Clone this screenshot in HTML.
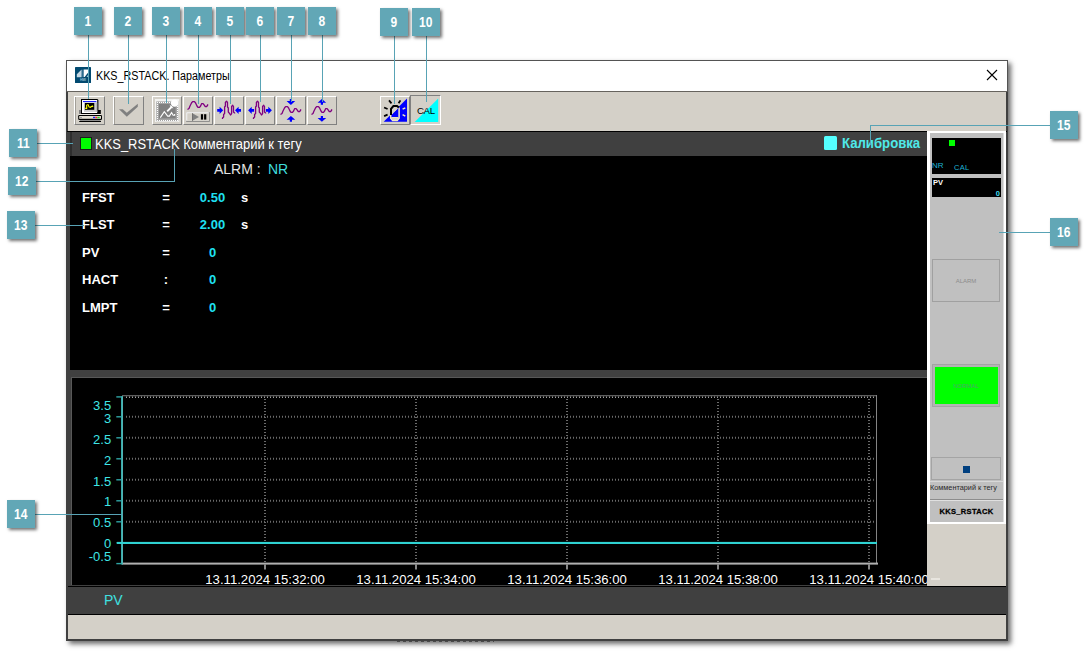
<!DOCTYPE html>
<html lang="ru">
<head>
<meta charset="utf-8">
<title>KKS_RSTACK. Параметры</title>
<style>
html,body{margin:0;padding:0;}
body{width:1089px;height:651px;background:#fff;position:relative;overflow:hidden;font-family:"Liberation Sans",sans-serif;}
.abs{position:absolute;}
/* callouts */
.co{position:absolute;width:28px;height:28px;background:#62a7b6;color:#fff;font-weight:bold;font-size:14px;line-height:28px;text-align:center;box-shadow:2px 2px 3px rgba(0,0,0,.55);z-index:30;}
.co span{display:inline-block;transform:scaleX(.86);}
.ln{position:absolute;background:#58a3b5;z-index:25;}
/* window */
#win{position:absolute;left:66px;top:60px;width:942px;height:581px;background:#404040;box-shadow:3px 3px 5px rgba(0,0,0,.58);}
#title{position:absolute;left:1px;top:1px;width:940px;height:30px;background:#fff;}
#title .t{position:absolute;left:29px;transform-origin:0 50%;transform:scaleX(.897);top:7px;font-size:12px;line-height:16px;color:#000;white-space:nowrap;}
#tbar{position:absolute;left:2px;top:32px;width:938px;height:39px;background:#d4d0c8;}
.btn{position:absolute;top:36px;width:28px;height:27px;border:1px solid;border-color:#fff #808080 #808080 #fff;background:#d4d0c8;}
.btn svg{position:absolute;left:-1px;top:-1px;}
.btn.dn{border-color:#808080 #fff #fff #808080;background:#d4d0c8;}
#hdr{position:absolute;left:6px;top:72px;width:855px;height:24px;background:#404040;}
#top{position:absolute;left:4px;top:96px;width:857px;height:214px;background:#000;}
#chart{position:absolute;left:5px;top:317px;width:856px;height:208px;background:#000;}
#leg{position:absolute;left:2px;top:526px;width:938px;height:29px;background:#404040;box-sizing:border-box;border-top:1px solid #000;border-bottom:1px solid #000;}
#stat{position:absolute;left:2px;top:555px;width:938px;height:24px;background:#d4d0c8;}
.row{position:absolute;left:0;font-weight:bold;font-size:13px;line-height:16px;color:#fff;white-space:nowrap;}
.row span{position:absolute;top:0;}
.cy{color:#1fe0f2;}
/* faceplate */
#fp{position:absolute;left:861px;top:71px;width:79px;height:393px;background:#c0c0c0;}
</style>
</head>
<body>

<div id="win">
  <div class="abs" style="left:0;top:0;width:942px;height:32px;background:#535353"></div>
  <div id="title">
    <svg class="abs" style="left:8px;top:6px" width="16" height="16" viewBox="0 0 16 16">
      <rect width="16" height="16" rx="0.6" fill="#024a70"/>
      <polygon points="1.8,7.2 6.6,2.6 6.6,10.3 1.8,10.3" fill="#c4d8e4"/>
      <rect x="7" y="2.6" width="1.7" height="7.7" fill="#2c6c8e"/>
      <polygon points="8.7,2.4 13.1,2.4 13.1,5.6 9.7,9.9 8.7,9.9" fill="#ffffff"/>
      <polygon points="13.1,7.8 13.1,10.1 11.5,10.1" fill="#a8c4d4"/>
      <text x="7.9" y="13.9" font-size="2.6" font-weight="bold" text-anchor="middle" fill="#9cc0d4" font-family="Liberation Sans, sans-serif" textLength="6" lengthAdjust="spacingAndGlyphs">HMI</text>
    </svg>
    <div class="t">KKS_RSTACK. Параметры</div>
    <svg class="abs" style="left:919px;top:8px" width="12" height="12" viewBox="0 0 12 12"><path d="M1 1 L11 11 M11 1 L1 11" stroke="#000" stroke-width="1.1" fill="none"/></svg>
  </div>
  <div class="abs" style="left:1px;top:31px;width:940px;height:1px;background:#66635e"></div>
  <div id="tbar"></div>
<div class="btn" style="left:8px;width:29px;box-shadow:inset 1px 0 0 #a29f98"><svg width="30" height="29" viewBox="1 1 30 29" style="left:0">
<rect x="5" y="15" width="2" height="4" fill="#808080"/>
<rect x="24" y="15" width="2.8" height="4" fill="#000"/>
<path d="M7 4 H23.4 L24.4 5 V19 H7 Z" fill="#000"/>
<rect x="8" y="5" width="15.2" height="13" fill="#fff"/>
<rect x="21.5" y="7.5" width="1.7" height="9.5" fill="#b8b8b8"/>
<rect x="10" y="15.7" width="13.2" height="1.1" fill="#c8c8c8"/>
<rect x="9" y="6" width="13.4" height="1.1" fill="#2020ff"/>
<rect x="10" y="7.5" width="11.5" height="8.2" fill="#c0c0c0"/>
<rect x="11" y="8" width="9.2" height="6.8" fill="#000"/>
<path d="M11.2 13.4 H12.7 V10.2 L13.3 9.7 H14.2 L14.9 11.9 L16.3 12.3 L18.4 11.1" stroke="#ffff00" stroke-width="1.1" fill="none"/>
<path d="M18 10.2 L19.6 11.3 L18 12.2 Z" fill="#ffff00"/>
<rect x="5" y="19" width="22" height="1" fill="#ece8e0"/>
<rect x="4.2" y="20" width="23.8" height="5" rx="1.2" fill="#000"/>
<rect x="5.2" y="21" width="21.8" height="2.8" fill="#e2ded2"/>
<rect x="6" y="22" width="2" height="1" fill="#a0a0a0"/>
<rect x="19" y="21.8" width="2.2" height="1.3" fill="#2020ff"/>
<rect x="21.3" y="21.8" width="2" height="1.3" fill="#ff2020"/>
<rect x="23.4" y="21.8" width="2.3" height="1.3" fill="#20e020"/>
<rect x="6" y="25" width="20.5" height="1" fill="#8c8c8c"/>
<rect x="5.2" y="26" width="21.8" height="1" fill="#000"/>
</svg></div>
<div class="btn" style="left:47px;width:29px;box-shadow:inset 1px 0 0 #a29f98"><svg width="30" height="29" viewBox="1 1 30 29" style="left:0"><g transform="translate(-1,0)"><polygon points="7,14.3 10.8,14.3 14.8,17.8 25.8,8.8 25.8,11.8 14.8,21.8" fill="#808080"/></g></svg></div>
<div class="btn" style="left:86px"><svg width="30" height="29" viewBox="1 1 30 29">
<rect x="4" y="4" width="24.3" height="23" fill="#f4f4f2"/>
<rect x="5.3" y="6.4" width="22" height="19.8" fill="#a4a4a4"/>
<path d="M6 7.5 H27 M6 25.5 H27" stroke="#fff" stroke-width="1" stroke-dasharray="1 1" fill="none"/><path d="M6.5 7 V26 M26.5 7 V26" stroke="#fff" stroke-width="1" stroke-dasharray="1 1" fill="none"/>
<rect x="8" y="9" width="16.6" height="14.4" fill="#808080"/>
<path d="M9.3 22.6 L13.3 16.7 L16.7 21.1 H18.4 L20.6 17.5 L22.1 20.2 H23.6 V18.9" stroke="#fff" stroke-width="1.1" fill="none"/>
<path d="M16.2 16.4 L21 11.5" stroke="#fff" stroke-width="1.8" fill="none"/>
<path d="M18.5 9.5 L22.5 13.2 L20 13 Z" fill="#fff"/>
<circle cx="23.6" cy="8.1" r="3.7" fill="#fff"/>
</svg></div>
<div class="btn" style="left:117px"><svg width="30" height="29" viewBox="1 1 30 29">
<path d="M5.5 14.5 L7 13.5 L8 11 L9.5 8 L10.6 6.6 L12.5 6.6 L13.6 8 L15 11 L16 12.4 L17.5 12.4 L18.6 11 L19.7 8.6 L21.1 8.6 L22.2 10 L23.1 11.5 L24.6 11.5 L25.6 10.3 L25.6 9.3" stroke="#800080" stroke-width="1.3" fill="none" stroke-linejoin="round"/>
<rect x="4.2" y="17.2" width="23.6" height="9.6" fill="#808080"/>
<rect x="4.2" y="17.2" width="22.6" height="8.6" fill="#fff"/>
<rect x="5.2" y="18.2" width="21.6" height="7.6" fill="#d4d0c8"/>
<rect x="10" y="18.2" width="0.9" height="7.6" fill="#606060"/>
<polygon points="10.8,18.4 17,21.9 10.8,25.4" fill="#808080"/>
<rect x="18.9" y="19.2" width="2.2" height="5.4" fill="#000"/>
<rect x="22.1" y="19.2" width="2.2" height="5.4" fill="#000"/>
</svg></div>
<div class="btn" style="left:148px"><svg width="30" height="29" viewBox="1 1 30 29"><path d="M9.5 24 L9.5 23 L10.6 22 L10.6 19.5 L11.6 18.5 L11.6 12 L12.4 11 L12.4 7.5 L13.5 6.2 L14.5 7.5 L14.5 12 L15.3 13 L15.3 17 L16.2 18 L17.5 20 L18.6 18.5 L18.6 11.5 L19.7 10.3 L20.5 11.5 L20.5 17 L21.6 18 L21.6 18.6" stroke="#800080" stroke-width="1.3" fill="none" stroke-linejoin="round"/><polygon points="4.2,14 6.6,14 6.6,11.8 10.2,15.35 6.6,18.9 6.6,16.7 4.2,16.7" fill="#0000ff"/><polygon points="28,14 25.6,14 25.6,11.8 22,15.35 25.6,18.9 25.6,16.7 28,16.7" fill="#0000ff"/></svg></div>
<div class="btn" style="left:179px"><svg width="30" height="29" viewBox="1 1 30 29"><path d="M9.5 24 L9.5 23 L10.6 22 L10.6 19.5 L11.6 18.5 L11.6 12 L12.4 11 L12.4 7.5 L13.5 6.2 L14.5 7.5 L14.5 12 L15.3 13 L15.3 17 L16.2 18 L17.5 20 L18.6 18.5 L18.6 11.5 L19.7 10.3 L20.5 11.5 L20.5 17 L21.6 18 L21.6 18.6" stroke="#800080" stroke-width="1.3" fill="none" stroke-linejoin="round"/><polygon points="10.1,14 7.699999999999999,14 7.699999999999999,11.8 4.1,15.35 7.699999999999999,18.9 7.699999999999999,16.7 10.1,16.7" fill="#0000ff"/><polygon points="21.9,14 24.299999999999997,14 24.299999999999997,11.8 27.9,15.35 24.299999999999997,18.9 24.299999999999997,16.7 21.9,16.7" fill="#0000ff"/></svg></div>
<div class="btn" style="left:210px"><svg width="30" height="29" viewBox="1 1 30 29"><g transform="translate(0,5)"><path d="M5.5 14.5 L7 13.5 L8 11 L9.5 8 L10.6 6.6 L12.5 6.6 L13.6 8 L15 11 L16 12.4 L17.5 12.4 L18.6 11 L19.7 8.6 L21.1 8.6 L22.2 10 L23.1 11.5 L24.6 11.5 L25.6 10.3 L25.6 9.3" stroke="#800080" stroke-width="1.3" fill="none" stroke-linejoin="round"/></g><polygon points="14.8,4.1 17,4.1 17,6.1 20.2,6.1 15.9,9.899999999999999 11.6,6.1 14.8,6.1" fill="#0000ff"/><polygon points="14.8,26.8 17,26.8 17,24.8 20.2,24.8 15.9,21.0 11.6,24.8 14.8,24.8" fill="#0000ff"/></svg></div>
<div class="btn" style="left:241px"><svg width="30" height="29" viewBox="1 1 30 29"><g transform="translate(0,5)"><path d="M5.5 14.5 L7 13.5 L8 11 L9.5 8 L10.6 6.6 L12.5 6.6 L13.6 8 L15 11 L16 12.4 L17.5 12.4 L18.6 11 L19.7 8.6 L21.1 8.6 L22.2 10 L23.1 11.5 L24.6 11.5 L25.6 10.3 L25.6 9.3" stroke="#800080" stroke-width="1.3" fill="none" stroke-linejoin="round"/></g><polygon points="14.8,9.8 17,9.8 17,7.800000000000001 20.2,7.800000000000001 15.9,4.000000000000001 11.6,7.800000000000001 14.8,7.800000000000001" fill="#0000ff"/><polygon points="14.8,20.9 17,20.9 17,22.9 20.2,22.9 15.9,26.7 11.6,22.9 14.8,22.9" fill="#0000ff"/></svg></div>
<div class="btn" style="left:314px"><svg width="30" height="29" viewBox="1 1 30 29"><g transform="translate(-1,-1)">
<polygon points="5.7,27.8 29,4.5 29,27.8" fill="#0000ff"/>
<polygon points="13.9,20.2 13.9,14.9 15.6,13 19.2,13 20.4,14 13.9,20.4" fill="#d4d0c8"/>
<path d="M14.2 19.6 L18.6 15.2" stroke="#f0e8c0" stroke-width="1" stroke-dasharray="1 .8" fill="none"/>
<polygon points="13.2,22.9 20.5,22.9 20.5,24.2 18.9,25.9 14.9,25.9 13.2,24.2" fill="#d4d0c8"/>
<path d="M13.6 23.5 H20" stroke="#eee6c2" stroke-width=".8" fill="none"/>
<path d="M21.1 13.4 V24.3 L19.2 26.4 H14.6 L12.7 24.3 V20.6" stroke="#f4ecc4" stroke-width="1.5" fill="none"/>
<path d="M13 21 V14.8 L15.4 12 H19 L20.9 13.6" stroke="#000" stroke-width="2" fill="none" stroke-linejoin="miter"/>
<path d="M11 6.4 L13.5 9.3 M22.4 6.4 L20.6 9.3 M6.1 13.5 L9.6 15 M6.1 22.1 L9.6 20.6" stroke="#000" stroke-width="1.8" fill="none"/>
<path d="M27.3 13.8 L24.6 15.2 M24.6 20.6 L27.3 22.1" stroke="#f0e8c0" stroke-width="1.5" fill="none"/>
</g></svg></div>
<div class="btn dn" style="left:344px;top:35px;width:29px;height:28px"><svg width="31" height="30" viewBox="0 0 31 30" style="left:-1px;top:-1px">
<polygon points="4.7,27 28.2,3.5 28.2,27" fill="#00ffff"/>
<text x="6.9" y="18.8" font-family="Liberation Sans, sans-serif" font-size="9.7" textLength="18.2" lengthAdjust="spacing" fill="#000">CAL</text>
</svg></div>

  <div class="abs" style="left:1px;top:71px;width:940px;height:1px;background:#000"></div>

  <div class="abs" style="left:4px;top:72px;width:2px;height:24px;background:#2e2e2e"></div>
  <div id="hdr">
    <div class="abs" style="left:8px;top:5px;width:10px;height:11px;background:#00ff00;border:1px solid #1c1c1c"></div>
    <div class="abs" style="left:23px;top:4px;font-size:14px;line-height:17px;color:#fff;white-space:nowrap;transform-origin:0 50%;transform:scaleX(.924)">KKS_RSTACK Комментарий к тегу</div>
    <div class="abs" style="left:752px;top:4px;width:13px;height:14px;background:#55ffff;border-radius:1.5px"></div>
    <div class="abs" style="left:770px;top:3px;font-size:14px;line-height:17px;font-weight:bold;color:#4fe9e9;white-space:nowrap;transform-origin:0 50%;transform:scaleX(.94)">Калибровка</div>
  </div>
  <div id="top"><div class="abs" style="left:2px;top:0.5px">
    <div class="abs" style="left:142px;top:4px;font-size:14px;line-height:17px;color:#e4e4e4;white-space:nowrap">ALRM :</div>
    <div class="abs" style="left:196px;top:4px;font-size:14px;line-height:17px;color:#3fdcdc;white-space:nowrap">NR</div>
    <div class="row" style="top:33px"><span style="left:10px">FFST</span><span style="left:84px;width:20px;text-align:center">=</span><span class="cy" style="left:120.5px;width:40px;text-align:center">0.50</span><span style="left:169px">s</span></div>
    <div class="row" style="top:60.5px"><span style="left:10px">FLST</span><span style="left:84px;width:20px;text-align:center">=</span><span class="cy" style="left:120.5px;width:40px;text-align:center">2.00</span><span style="left:169px">s</span></div>
    <div class="row" style="top:88px"><span style="left:10px">PV</span><span style="left:84px;width:20px;text-align:center">=</span><span class="cy" style="left:120.5px;width:40px;text-align:center">0</span></div>
    <div class="row" style="top:115.5px"><span style="left:10px">HACT</span><span style="left:84px;width:20px;text-align:center">:</span><span class="cy" style="left:120.5px;width:40px;text-align:center">0</span></div>
    <div class="row" style="top:143px"><span style="left:10px">LMPT</span><span style="left:84px;width:20px;text-align:center">=</span><span class="cy" style="left:120.5px;width:40px;text-align:center">0</span></div>
  </div></div>
  <div id="chart"><svg width="856" height="208" viewBox="71 377 856 208" style="position:absolute;left:0;top:0" font-family="Liberation Sans, sans-serif" font-size="13">
<rect x="71" y="377" width="856" height="1" fill="#585858"/><rect x="71" y="377" width="1" height="208" fill="#585858"/>
<line x1="126" x2="876" y1="521.80" y2="521.80" stroke="#6a6a6a" stroke-width="2" stroke-dasharray="1 2"/>
<line x1="126" x2="876" y1="500.80" y2="500.80" stroke="#6a6a6a" stroke-width="2" stroke-dasharray="1 2"/>
<line x1="126" x2="876" y1="479.80" y2="479.80" stroke="#6a6a6a" stroke-width="2" stroke-dasharray="1 2"/>
<line x1="126" x2="876" y1="458.80" y2="458.80" stroke="#6a6a6a" stroke-width="2" stroke-dasharray="1 2"/>
<line x1="126" x2="876" y1="437.80" y2="437.80" stroke="#6a6a6a" stroke-width="2" stroke-dasharray="1 2"/>
<line x1="126" x2="876" y1="416.80" y2="416.80" stroke="#6a6a6a" stroke-width="2" stroke-dasharray="1 2"/>
<line x1="265" x2="265" y1="399" y2="562.6" stroke="#6a6a6a" stroke-width="2" stroke-dasharray="1 2"/>
<rect x="264.3" y="564.5" width="1.4" height="5" fill="#c0c0c0"/>
<line x1="416" x2="416" y1="399" y2="562.6" stroke="#6a6a6a" stroke-width="2" stroke-dasharray="1 2"/>
<rect x="415.3" y="564.5" width="1.4" height="5" fill="#c0c0c0"/>
<line x1="567" x2="567" y1="399" y2="562.6" stroke="#6a6a6a" stroke-width="2" stroke-dasharray="1 2"/>
<rect x="566.3" y="564.5" width="1.4" height="5" fill="#c0c0c0"/>
<line x1="718" x2="718" y1="399" y2="562.6" stroke="#6a6a6a" stroke-width="2" stroke-dasharray="1 2"/>
<rect x="717.3" y="564.5" width="1.4" height="5" fill="#c0c0c0"/>
<line x1="869" x2="869" y1="399" y2="562.6" stroke="#6a6a6a" stroke-width="2" stroke-dasharray="1 2"/>
<rect x="868.3" y="564.5" width="1.4" height="5" fill="#c0c0c0"/>
<rect x="122" y="395" width="755" height="1.3" fill="#5e5e5e"/>
<line x1="126" x2="876" y1="397.2" y2="397.2" stroke="#a0a0a0" stroke-width="1.4" stroke-dasharray="1 2"/>
<rect x="876" y="395" width="1" height="169.10" fill="#848484"/>
<rect x="122" y="562.6" width="756" height="2" fill="#b0b0b0"/>
<rect x="121" y="396.1" width="1" height="168.50" fill="#38acac"/>
<rect x="122" y="396.1" width="1" height="168.50" fill="#52b4b4"/>
<rect x="116.3" y="396.20" width="5" height="1.4" fill="#2fa4a4"/>
<rect x="116.3" y="416.10" width="5" height="1.4" fill="#2fa4a4"/>
<rect x="116.3" y="437.10" width="5" height="1.4" fill="#2fa4a4"/>
<rect x="116.3" y="458.10" width="5" height="1.4" fill="#2fa4a4"/>
<rect x="116.3" y="479.10" width="5" height="1.4" fill="#2fa4a4"/>
<rect x="116.3" y="500.10" width="5" height="1.4" fill="#2fa4a4"/>
<rect x="116.3" y="521.10" width="5" height="1.4" fill="#2fa4a4"/>
<rect x="116.3" y="542.20" width="5" height="1.4" fill="#2fa4a4"/>
<rect x="116.3" y="562.90" width="5" height="1.4" fill="#2fa4a4"/>
<rect x="117" y="541.9" width="760" height="2.1" fill="#2fd2d2"/>
<text x="111.2" y="409.90" text-anchor="end" fill="#3fe6e6">3.5</text>
<text x="111.2" y="423.00" text-anchor="end" fill="#3fe6e6">3</text>
<text x="111.2" y="444.00" text-anchor="end" fill="#3fe6e6">2.5</text>
<text x="111.2" y="464.70" text-anchor="end" fill="#3fe6e6">2</text>
<text x="111.2" y="485.60" text-anchor="end" fill="#3fe6e6">1.5</text>
<text x="111.2" y="506.10" text-anchor="end" fill="#3fe6e6">1</text>
<text x="111.2" y="526.90" text-anchor="end" fill="#3fe6e6">0.5</text>
<text x="111.2" y="547.80" text-anchor="end" fill="#3fe6e6">0</text>
<text x="111.2" y="561.30" text-anchor="end" fill="#3fe6e6">-0.5</text>
<text x="265.1" y="584.2" font-size="13.15" text-anchor="middle" fill="#fff">13.11.2024 15:32:00</text>
<text x="416.1" y="584.2" font-size="13.15" text-anchor="middle" fill="#fff">13.11.2024 15:34:00</text>
<text x="567.1" y="584.2" font-size="13.15" text-anchor="middle" fill="#fff">13.11.2024 15:36:00</text>
<text x="718.1" y="584.2" font-size="13.15" text-anchor="middle" fill="#fff">13.11.2024 15:38:00</text>
<text x="869.1" y="584.2" font-size="13.15" text-anchor="middle" fill="#fff">13.11.2024 15:40:00</text>
</svg></div>
  <div id="leg"><div class="abs" style="left:36px;top:5px;font-size:14px;line-height:17px;color:#3fe0e0">PV</div></div>
  <div id="stat"></div>
  <div class="abs" style="left:865px;top:518px;width:9px;height:2px;background:#e8e5df;z-index:5"></div>
  <div class="abs" style="left:331px;top:581px;width:97px;height:1px;background:repeating-linear-gradient(90deg,#3a3a3a 0 3px,transparent 3px 6px);opacity:.8"></div>
  <div id="fp">
<div class="abs" style="left:0px;top:0px;width:79px;height:393px;box-sizing:border-box;border:2px solid #fff;border-left-width:3px;box-shadow:inset -1px 0 0 #dedede"></div>
<div class="abs" style="left:5px;top:7px;width:69px;height:36px;background:#000"><div class="abs" style="left:17px;top:2px;width:6px;height:6px;background:#00ff00"></div><div class="abs" style="left:0px;top:23px;font-size:8px;line-height:9px;color:#1fb4d4">NR</div><div class="abs" style="left:22px;top:25px;font-size:7.5px;line-height:9px;color:#1fb4d4;letter-spacing:.3px">CAL</div></div>
<div class="abs" style="left:5px;top:47px;width:69px;height:19px;background:#000"><div class="abs" style="left:1px;top:0px;font-size:7.5px;line-height:9px;color:#fff;font-weight:bold">PV</div><div class="abs" style="right:1px;top:11px;font-size:7.5px;line-height:9px;color:#3fdcf0;font-weight:bold">0</div></div>
<div class="abs" style="left:5px;top:128px;width:68px;height:43px;box-sizing:border-box;border:1px solid #a0a0a0;"><div class="abs" style="left:0;right:0;top:17px;text-align:center;font-size:6px;line-height:8px;color:#8c8c8c">ALARM</div></div>
<div class="abs" style="left:5px;top:233px;width:68px;height:43px;box-sizing:border-box;border:1px solid #a4a4a4;background:#b4b4b4"><div class="abs" style="left:2px;top:2px;width:63px;height:37px;background:#00ff00"></div><div class="abs" style="left:0;right:0;top:17px;text-align:center;font-size:6px;line-height:8px;color:#4aa86a">NORMAL</div></div>
<div class="abs" style="left:4px;top:326px;width:70px;height:23px;box-sizing:border-box;border:1px solid #a4a4a4;"><div class="abs" style="left:31px;top:8px;width:7px;height:7px;background:#003f7f"></div></div>
<div class="abs" style="left:3px;top:350px;width:73px;height:1px;background:#d8d8d8"></div>
<div class="abs" style="left:3px;top:352px;width:73px;height:10px;font-size:7.3px;line-height:10px;color:#2a2a2a;white-space:nowrap;text-align:left">Комментарий к тегу</div>
<div class="abs" style="left:3px;top:368px;width:73px;height:1px;background:#8c8c8c"></div>
<div class="abs" style="left:3px;top:369px;width:73px;height:1px;background:#e0e0e0"></div>
<div class="abs" style="left:3px;top:376px;width:73px;height:10px;font-size:7.5px;line-height:10px;color:#000;font-weight:bold;white-space:nowrap;text-align:center;letter-spacing:.35px;-webkit-text-stroke:.3px #000">KKS_RSTACK</div>
</div>
  <div class="abs" style="left:861px;top:464px;width:79px;height:62px;background:#d4d0c8"></div>
</div>

<div class="co" style="left:74px;top:7px"><span>1</span></div>
<div class="co" style="left:114px;top:7px"><span>2</span></div>
<div class="co" style="left:152px;top:7px"><span>3</span></div>
<div class="co" style="left:184px;top:7px"><span>4</span></div>
<div class="co" style="left:216px;top:7px"><span>5</span></div>
<div class="co" style="left:246px;top:7px"><span>6</span></div>
<div class="co" style="left:277px;top:7px"><span>7</span></div>
<div class="co" style="left:308px;top:7px"><span>8</span></div>
<div class="co" style="left:380px;top:8px"><span>9</span></div>
<div class="co" style="left:412px;top:8px"><span>10</span></div>
<div class="co" style="left:9px;top:129px"><span>11</span></div>
<div class="co" style="left:8px;top:167px"><span>12</span></div>
<div class="co" style="left:7px;top:211px"><span>13</span></div>
<div class="co" style="left:7px;top:500px"><span>14</span></div>
<div class="co" style="left:1050px;top:111px"><span>15</span></div>
<div class="co" style="left:1050px;top:218px"><span>16</span></div>
<div class="ln" style="left:88px;top:35px;width:1px;height:64px"></div>
<div class="ln" style="left:128px;top:35px;width:1px;height:69px"></div>
<div class="ln" style="left:166px;top:35px;width:1px;height:68px"></div>
<div class="ln" style="left:198px;top:35px;width:1px;height:69px"></div>
<div class="ln" style="left:230px;top:35px;width:1px;height:69px"></div>
<div class="ln" style="left:260px;top:35px;width:1px;height:67px"></div>
<div class="ln" style="left:291px;top:35px;width:1px;height:67px"></div>
<div class="ln" style="left:322px;top:35px;width:1px;height:67px"></div>
<div class="ln" style="left:394px;top:36px;width:1px;height:68px"></div>
<div class="ln" style="left:426px;top:36px;width:1px;height:66px"></div>
<div class="ln" style="left:37px;top:143px;width:36px;height:1px"></div>
<div class="ln" style="left:36px;top:181px;width:139px;height:1px"></div>
<div class="ln" style="left:174px;top:149px;width:1px;height:32px"></div>
<div class="ln" style="left:35px;top:225px;width:49px;height:1px"></div>
<div class="ln" style="left:35px;top:514px;width:88px;height:1px"></div>
<div class="ln" style="left:870px;top:125px;width:180px;height:1px"></div>
<div class="ln" style="left:870px;top:125px;width:1px;height:20px"></div>
<div class="ln" style="left:999px;top:232px;width:51px;height:1px"></div>
</body>
</html>
